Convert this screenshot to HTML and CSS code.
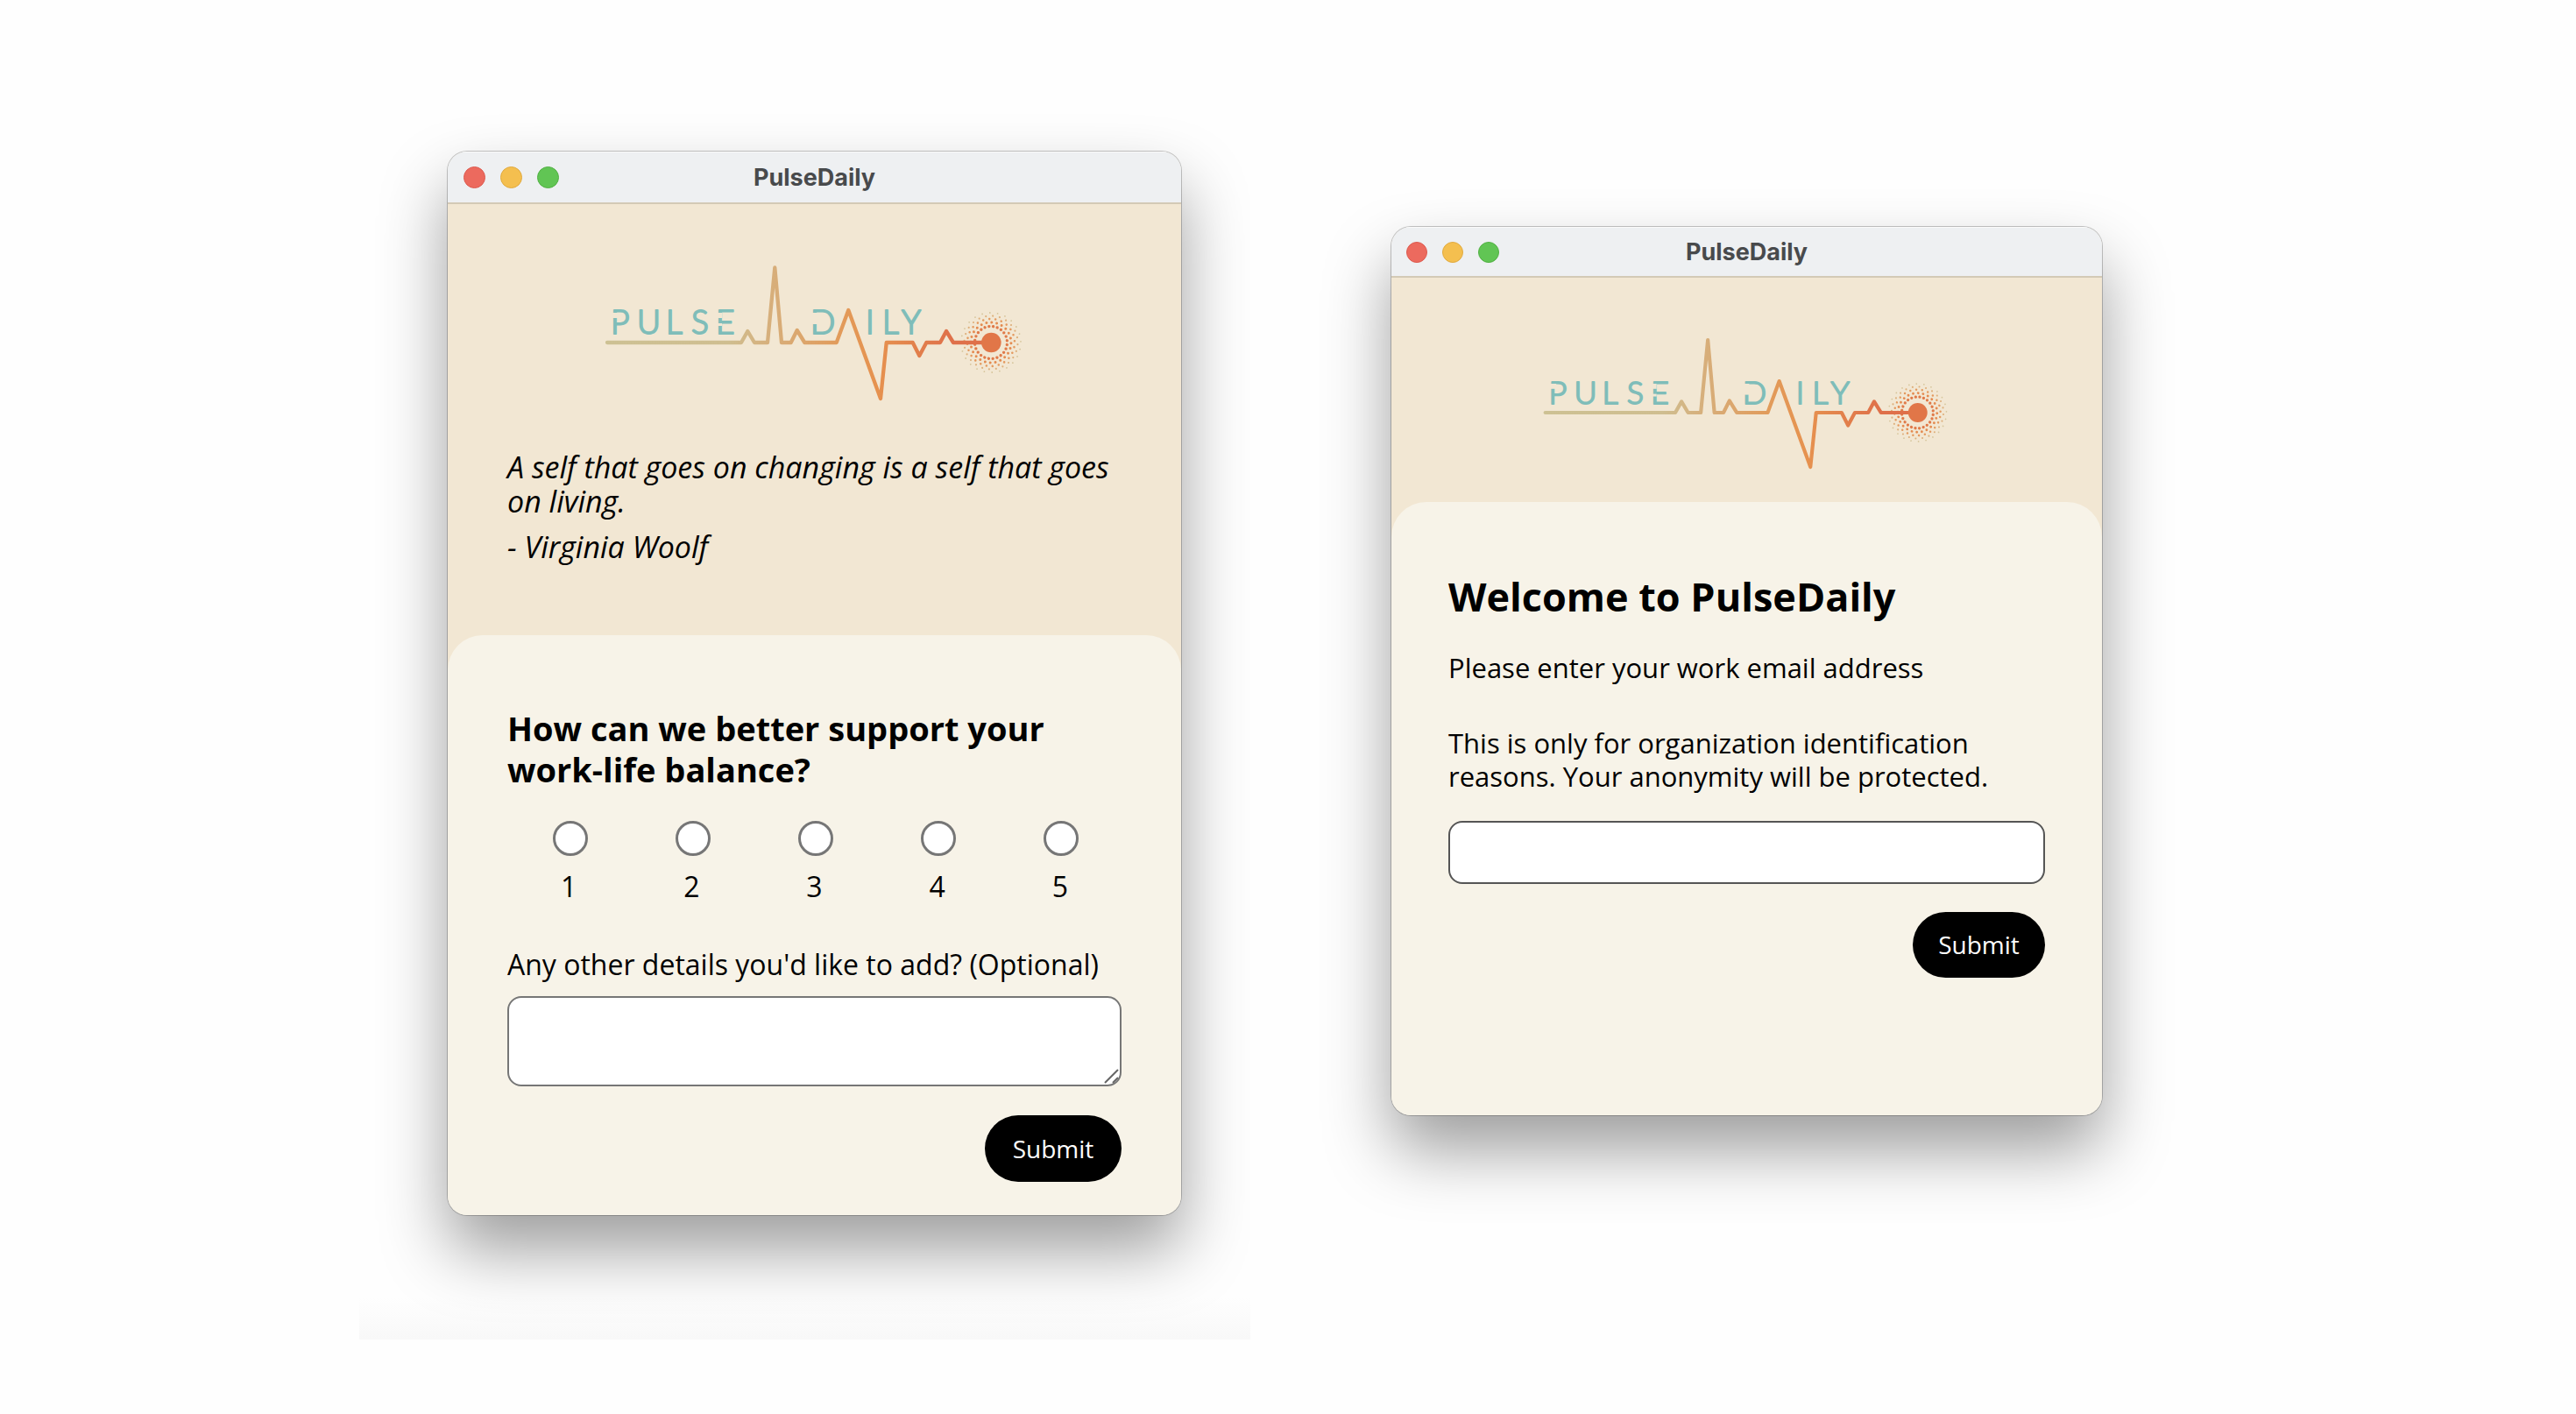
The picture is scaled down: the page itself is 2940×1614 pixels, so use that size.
FILE: index.html
```html
<!DOCTYPE html>
<html lang="en">
<head>
<meta charset="utf-8">
<title>PulseDaily</title>
<meta name="viewport" content="width=device-width, initial-scale=1">
<link rel="stylesheet" href="styles.css">
</head>
<body>
<svg class="sprite" aria-hidden="true">
  <defs>
    <linearGradient id="pulse" gradientUnits="userSpaceOnUse" x1="12" y1="0" x2="408" y2="0">
      <stop offset="0" stop-color="#cdc193"/>
      <stop offset=".35" stop-color="#cfbe90"/>
      <stop offset=".48" stop-color="#d7ae7a"/>
      <stop offset=".66" stop-color="#e19c5c"/>
      <stop offset=".78" stop-color="#e6924f"/>
      <stop offset=".92" stop-color="#e17c4b"/>
      <stop offset="1" stop-color="#df704a"/>
    </linearGradient>
    <symbol id="logo" viewBox="0 0 500 180">
      <g class="logo-word">
        <text y="91" x="17 47 80 109 137">PULSE</text>
        <text y="91" x="245">D</text>
        <text y="91" x="308 327 349">ILY</text>
      </g>
      <g class="logo-gap">
        <rect x="17" y="67" width="9" height="6"/>
        <rect x="136" y="67" width="8" height="6"/>
        <rect x="136" y="79" width="8" height="3"/>
        <rect x="244" y="67" width="9" height="13"/>
      </g>
      <g class="logo-dots">
        <circle class="dots-1" cx="451" cy="101" r="18.5" pathLength="24" transform="rotate(8 451 101)"/>
        <circle class="dots-2" cx="451" cy="101" r="23" pathLength="24" transform="rotate(2 451 101)"/>
        <circle class="dots-3" cx="451" cy="101" r="27" pathLength="24" transform="rotate(11 451 101)"/>
        <circle class="dots-4" cx="451" cy="101" r="30.5" pathLength="24" transform="rotate(4 451 101)"/>
        <circle class="dots-5" cx="451" cy="101" r="34" pathLength="24" transform="rotate(-2 451 101)"/>
      </g>
      <path class="logo-line" d="M13 101H166L173.300 88L181 101H196L204.300 15.500L212 101H222.700L229.700 87L238.300 101H274.700L288.300 64L325 165L331.700 101H361.700L369.300 116L377.300 101H393L400 88L408 101H451"/>
      <circle class="logo-core" cx="451.300" cy="101" r="11.300"/>
    </symbol>
  </defs>
</svg>

<main class="gallery">
  <figure class="frame frame-survey">
    <section class="window window-survey">
      <header class="titlebar">
        <div class="lights"><span class="light red"></span><span class="light amber"></span><span class="light green"></span></div>
        <h2 class="title">PulseDaily</h2>
      </header>
      <div class="masthead">
        <svg class="logo" viewBox="0 0 500 180" role="img" aria-label="Pulse Daily"><use href="#logo"/></svg>
        <blockquote class="quote">
          <p>A self that goes on changing is a self that goes on living.</p>
          <p>- Virginia Woolf</p>
        </blockquote>
      </div>
      <form class="card">
        <h1 class="question">How can we better support your work-life balance?</h1>
        <div class="scale" role="radiogroup" aria-label="Rating">
          <label><input type="radio" name="rating" value="1"><span>1</span></label>
          <label><input type="radio" name="rating" value="2"><span>2</span></label>
          <label><input type="radio" name="rating" value="3"><span>3</span></label>
          <label><input type="radio" name="rating" value="4"><span>4</span></label>
          <label><input type="radio" name="rating" value="5"><span>5</span></label>
        </div>
        <label class="details-label" for="details">Any other details you'd like to add? (Optional)</label>
        <textarea class="details" id="details"></textarea>
        <button class="submit" type="button">Submit</button>
      </form>
    </section>
  </figure>

  <figure class="frame frame-welcome">
    <section class="window window-welcome">
      <header class="titlebar">
        <div class="lights"><span class="light red"></span><span class="light amber"></span><span class="light green"></span></div>
        <h2 class="title">PulseDaily</h2>
      </header>
      <div class="masthead">
        <svg class="logo" viewBox="0 0 500 180" role="img" aria-label="Pulse Daily"><use href="#logo"/></svg>
      </div>
      <form class="card">
        <h1 class="welcome">Welcome to PulseDaily</h1>
        <label class="prompt" for="email">Please enter your work email address</label>
        <p class="note">This is only for organization identification reasons. Your anonymity will be protected.</p>
        <input class="email" id="email" type="email">
        <button class="submit" type="button">Submit</button>
      </form>
    </section>
  </figure>
</main>
</body>
</html>
```
FILE: styles.css
```css
:root {
  --sand: #f2e7d3;
  --cream: #f7f3e8;
}

* {
  box-sizing: border-box;
  margin: 0;
}

body {
  background: #fefefe;
  color: #000;
  font-family: "Trebuchet MS", "Open Sans", sans-serif;
}

.sprite {
  position: absolute;
  width: 0;
  height: 0;
}

.gallery {
  display: flex;
  justify-content: center;
  align-items: flex-start;
  gap: 161px;
}

.frame-survey {
  flex: 0 1 1017px;
  padding: 173px 79px 142px 101px;
  overflow: hidden;
  background: linear-gradient(to top, #f8f8f8, #fefefe 48px);
}

.frame-welcome {
  flex: 0 1 942px;
  padding: 259px 131px 141px 0;
}

/* Desktop window */
.window {
  overflow: hidden;
  border-radius: 22px;
  background: var(--cream);
  box-shadow: 0 0 0 1px rgba(0, 0, 0, .22), 0 40px 76px rgba(0, 0, 0, .38);
}

.titlebar {
  display: grid;
  grid-template-columns: 1fr auto 1fr;
  align-items: center;
  height: 60px;
  padding: 0 18px;
  background: #eef0f2;
  border-top: 1px solid #fafafa;
  border-bottom: 2px solid #d3cab6;
}

.lights {
  display: flex;
  gap: 17px;
}

.light {
  width: 25px;
  height: 25px;
  border-radius: 50%;
}

.red { background: #ec6a5e; border: 1px solid #dc5b50; }
.amber { background: #f4bf4f; border: 1px solid #e0aa40; }
.green { background: #61c554; border: 1px solid #52b044; }

.title {
  color: #484a4c;
  font: 700 27px/34px Inter, sans-serif;
}

.masthead {
  padding: 57px 68px 121px;
  margin-bottom: -40px;
  background: var(--sand);
}

.logo {
  display: block;
  width: 500px;
  max-width: 100%;
  margin: 0 auto;
}

.quote {
  margin-top: 44px;
  font-size: 34px;
  line-height: 39px;
  font-style: italic;
}

.quote p + p {
  margin-top: 13px;
}

.card {
  position: relative;
  display: flex;
  flex-direction: column;
  padding: 83px 68px 38px;
  border-radius: 40px 40px 0 0;
  background: var(--cream);
}

.question {
  font-size: 38px;
  line-height: 47px;
}

.scale {
  display: grid;
  grid-template-columns: repeat(5, 1fr);
  margin-top: 35px;
  font-size: 32px;
  line-height: 39px;
}

.scale label {
  display: flex;
  flex-direction: column;
  align-items: center;
  gap: 15px;
}

.scale input {
  appearance: none;
  width: 40px;
  height: 40px;
  margin: 0 0 0 3px;
  border: 3px solid #767676;
  border-radius: 50%;
  background: #fff;
}

.scale input:checked {
  box-shadow: inset 0 0 0 6px #fff;
  background: #000;
}

.details-label {
  margin-top: 50px;
  font-size: 32px;
  line-height: 39px;
}

.details {
  height: 103px;
  margin-top: 17px;
  padding: 12px 16px;
  border: 2px solid #767676;
  border-radius: 16px;
  font: inherit;
  font-size: 30px;
  resize: none;
  background: #fff url("data:image/svg+xml,%3Csvg xmlns='http://www.w3.org/2000/svg' width='20' height='20' fill='none' stroke='%23666' stroke-width='2'%3E%3Cpath d='M3 18 18 3M12 18 18 12'/%3E%3C/svg%3E") no-repeat right bottom;
}

.submit {
  align-self: flex-end;
  width: 156px;
  height: 76px;
  margin-top: 33px;
  padding: 0;
  border: 0;
  border-radius: 38px;
  background: #000;
  color: #fff;
  font: inherit;
  font-size: 28px;
}

/* The welcome window is drawn a little smaller */
.window-welcome .titlebar { height: 58px; padding: 0 17px; }
.window-welcome .light { width: 24px; height: 24px; }
.window-welcome .masthead { padding: 56px 65px 65px; }
.window-welcome .logo { width: 485px; }
.window-welcome .card { padding: 79px 65px 157px; }
.window-welcome .submit { width: 151px; height: 75px; margin-top: 32px; }

.welcome {
  font-size: 45px;
  line-height: 58px;
}

.prompt,
.note {
  font-size: 31px;
  line-height: 38px;
}

.prompt { margin-top: 33px; }
.note { margin-top: 48px; }

.email {
  height: 72px;
  margin-top: 32px;
  padding: 0 16px;
  border: 2px solid #555;
  border-radius: 16px;
  background: #fff;
  font: inherit;
  font-size: 30px;
}

/* Logo */
.logo-word {
  fill: #7fbdb9;
  stroke: #7fbdb9;
  stroke-width: 2;
  stroke-linejoin: round;
  font-family: Lato, sans-serif;
  font-size: 37px;
  font-weight: 300;
}

.logo-gap { fill: var(--sand); }

.logo-line {
  fill: none;
  stroke: url(#pulse);
  stroke-width: 4.300;
  stroke-linecap: round;
  stroke-linejoin: round;
}

.logo-core { fill: #e17648; }

.logo-dots circle {
  fill: none;
  stroke-linecap: round;
  stroke-dasharray: 0 1;
}

.logo-dots .dots-1 { stroke: #e07a49; stroke-width: 3.400; }
.logo-dots .dots-2 { stroke: #e48b50; stroke-width: 3; }
.logo-dots .dots-3 { stroke: #e49a5f; stroke-width: 2.600; }
.logo-dots .dots-4 { stroke: #deb07c; stroke-width: 2.200; }
.logo-dots .dots-5 { stroke: #d6c59b; stroke-width: 1.800; }
```
